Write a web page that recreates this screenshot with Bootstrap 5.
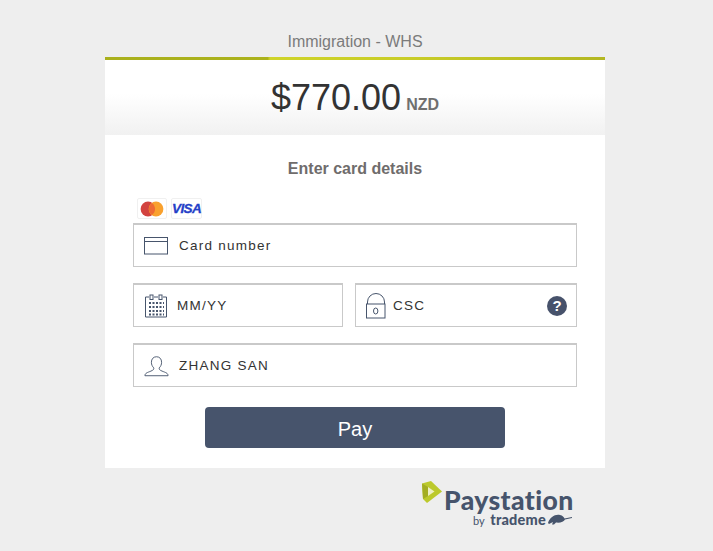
<!DOCTYPE html>
<html lang="en">
<head>
<meta charset="utf-8">
<title>Paystation</title>
<link rel="stylesheet" href="https://cdn.jsdelivr.net/npm/bootstrap@5.3.0/dist/css/bootstrap.min.css">
<style>
html,body{height:100%}
body{background:#eee;font-family:"Liberation Sans",Arial,sans-serif;color:#333;overflow:hidden}
.pay-wrap{width:500px;margin:0 0 0 105px;padding-top:31px}
.pay-title{font-size:16px;line-height:22px;color:#7b7b7b;text-align:center;margin:0 0 4px}
.pay-bar{height:3px;background:linear-gradient(90deg,#a9b01c 0,#abb21c 32.5%,#cfd42a 33%,#c9cd28 60%,#b3b722 100%)}
.pay-head{height:75px;background:linear-gradient(#fff 0,#fff 45%,#f1f1f1 100%);padding-top:13px;line-height:50px}
.pay-amt{font-size:36px;color:#333}
.pay-cur{font-size:16px;font-weight:700;color:#6f6f6f;margin-left:5px}
.pay-body{background:#fff;padding:24px 28px 20px;height:333px}
.pay-sub{font-size:16px;font-weight:700;line-height:20px;color:#6f6c6c;text-align:center;margin:0 0 19px}
.pay-logos{padding-left:4px;height:20px;margin-bottom:5px}
.pay-chip{width:30px;height:21px;background:#fff;border:1px solid #f0f0f0;border-radius:2px}
.pay-visa{font-size:13.5px;font-weight:700;font-style:italic;color:#2440c8;letter-spacing:-.6px;line-height:19px;width:31px;text-align:center;-webkit-text-stroke:.3px #2440c8}
.pay-field{height:44px;border:1px solid #c9c9c9;border-top-width:2px;background:#fff;font-size:13.5px;letter-spacing:1.25px;color:#333}
.pay-val{padding-top:2px}
.pay-gap{margin-bottom:16px}
.pay-ico{stroke:#47556c;fill:none;flex:none}
.pay-half{width:210px}
.pay-rest{width:222px}
.pay-help{width:20px;height:20px;border-radius:50%;background:#47526b;color:#fff;font-size:15px;font-weight:700;letter-spacing:0;line-height:20px;text-align:center;margin-right:9px}
.pay-ic-card{margin:0 11px 0 10px}
.pay-ic-cal{margin:0 10px 0 11px}
.pay-ic-lock{margin:0 7px 0 10px}
.pay-ic-user{margin:0 10px 0 10px}
.pay-btn{display:block;width:300px;height:41px;margin:20px auto 0;background:#47546c;border:0;border-radius:4px;color:#fff;font-size:20px;line-height:41px;padding:2px 0 0}
.pay-btn:hover{background:#47546c;color:#fff}
.pay-foot{width:154px;margin:12px 0 0 316px;position:relative;color:#46546c}
.pay-word{font-family:"Lato",sans-serif;font-weight:900;font-size:26.5px;line-height:28px;letter-spacing:.42px;margin-left:23px;padding-top:6px}
.pay-by{font-size:11px;line-height:14px;margin:-1px 0 0 52px;font-family:"Lato",sans-serif}
.pay-by b{font-family:"Lato",sans-serif;font-weight:900;font-size:14.5px;letter-spacing:.2px;margin-left:3px}
.pay-mark{position:absolute;left:0;top:0}
.pay-kiwi{position:absolute;left:126px;top:32px}
</style>
</head>
<body>
<div class="pay-wrap">
  <p class="pay-title">Immigration - WHS</p>
  <div class="pay-bar"></div>
  <div class="pay-head text-center"><span class="pay-amt">$770.00</span><span class="pay-cur">NZD</span></div>
  <div class="pay-body">
    <p class="pay-sub">Enter card details</p>
    <div class="pay-logos d-flex gap-1">
      <div class="pay-chip d-flex align-items-center justify-content-center">
        <svg width="24" height="16" viewBox="0 0 24 16"><circle cx="8" cy="8" r="7.4" fill="#d2423f"/><circle cx="16" cy="8" r="7.4" fill="#f9a12e"/><path d="M12 2a7.4 7.4 0 0 1 0 12a7.4 7.4 0 0 1 0-12z" fill="#ee6a34"/></svg>
      </div>
      <div class="pay-chip pay-visa">VISA</div>
    </div>
    <div class="pay-field pay-gap d-flex align-items-center">
      <svg class="pay-ico pay-ic-card" width="24" height="18" viewBox="0 0 24 18" stroke-width="1"><rect x=".5" y=".5" width="23" height="16.5"/><path d="M.5 4.500h23"/></svg>
      <span class="pay-val">Card number</span>
    </div>
    <div class="d-flex justify-content-between pay-gap">
      <div class="pay-field pay-half d-flex align-items-center">
        <svg class="pay-ico pay-ic-cal" width="22" height="24" viewBox="0 0 22 24" stroke-width="1"><path d="M4 3H.5v20h21V3H18M9 3h4"/><rect x="5" y="1" width="3" height="4.500"/><rect x="14" y="1" width="3" height="4.500"/><path stroke-dasharray="2 1.500" stroke-width="2" d="M4 9h15M4 13h15M4 17h15M4 20.500h15"/></svg>
        <span class="pay-val">MM/YY</span>
      </div>
      <div class="pay-rest pay-field d-flex align-items-center">
        <svg class="pay-ico pay-ic-lock" width="20" height="26" viewBox="0 0 20 26" stroke-width="1"><path d="M1.500 11V9a8.500 8.500 0 0 1 17 0v2"/><rect x=".5" y="11" width="18.500" height="14"/><ellipse cx="9.700" cy="18" rx="2.200" ry="3"/></svg>
        <span class="pay-val">CSC</span>
        <span class="pay-help ms-auto">?</span>
      </div>
    </div>
    <div class="pay-field d-flex align-items-center">
      <svg class="pay-ico pay-ic-user" width="25" height="22" viewBox="0 0 27 22" stroke-width="1"><path d="M13.500 1c-3.500 0-5.500 2.500-5.500 6 0 2.500 1 4.500 2.500 6 .5 1.500-.5 2.500-3 3.500C4 18 1 18.500 1 21.500h25c0-3-3-3.500-6.500-5-2.500-1-3.500-2-3-3.500 1.500-1.500 2.500-3.500 2.500-6 0-3.500-2-6-5.500-6z"/></svg>
      <span class="pay-val">ZHANG SAN</span>
    </div>
    <button type="button" class="btn pay-btn">Pay</button>
  </div>
  <div class="pay-foot">
    <svg class="pay-mark" width="22" height="24" viewBox="0 0 22 24"><path d="M1 3.500 10 1l11 10.500L6 23l-4-4z" fill="#bcc92c"/><path d="M1 3.500 7 7v9l-5 3z" fill="#a3ad22"/><path d="M7 7l6.500 4.500L7 16z" fill="#eef0c4"/></svg>
    <div class="pay-word">Paystation</div>
    <div class="pay-by">by <b>trademe</b></div>
    <svg class="pay-kiwi" width="26" height="13" viewBox="0 0 26 13"><path d="M1 11C3 5 8 2 13 3c2.500.5 4 2 4.500 3.500L25 5v1l-7 1.500C17 10 13 11 9 10.500L7 12.500H5l1-2.500-4 2z" fill="#46546c"/></svg>
  </div>
</div>
<script src="https://cdn.jsdelivr.net/npm/bootstrap@5.3.0/dist/js/bootstrap.bundle.min.js"></script>
</body>
</html>
